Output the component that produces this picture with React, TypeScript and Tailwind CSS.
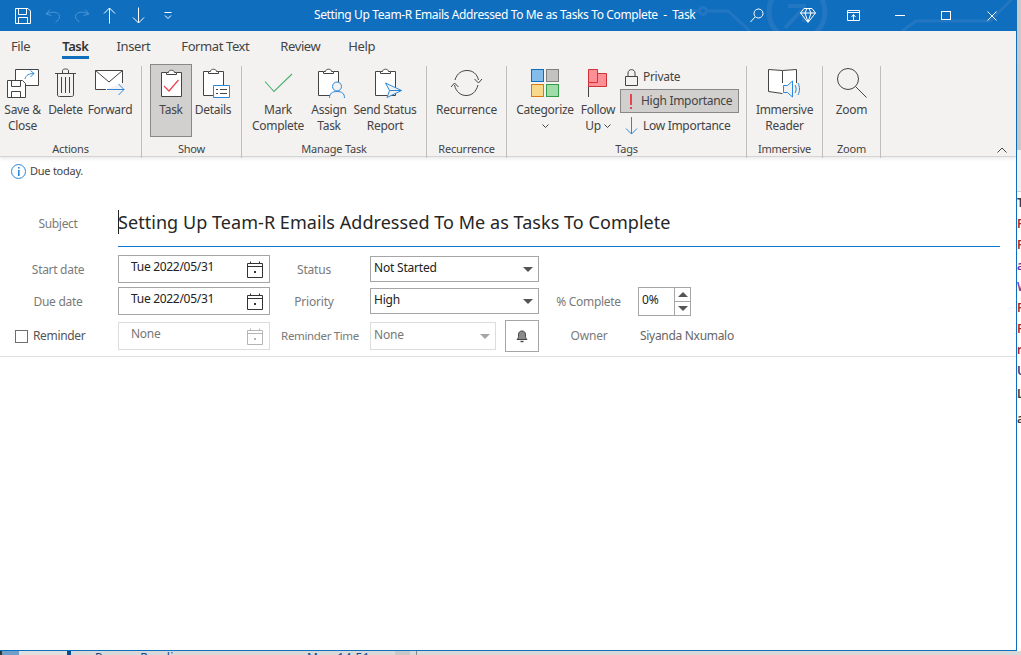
import type { ReactNode } from "react";

const ink = "#444444";
const blue = "#2b88d8";

function Svg({ w, h, children, className }: { w: number; h: number; children: ReactNode; className?: string }) {
  return (
    <svg width={w} height={h} viewBox={`0 0 ${w} ${h}`} fill="none" className={className}>
      {children}
    </svg>
  );
}

function Clipboard({ children }: { children?: ReactNode }) {
  return (
    <>
      <path d="M6.5 3.5H1.5V27.5H21.5V3.5H16.5" stroke={ink} fill="#fff" />
      <path d="M6.5 5.5V3.5H8.5C8.5 0.5 14.5 0.5 14.5 3.5H16.5V5.5Z" stroke={ink} fill="#fff" />
      {children}
    </>
  );
}

function Chevron() {
  return (
    <Svg w={7} h={5} className="inline-block align-middle">
      <path d="M0.5 0.5L3.5 3.5L6.5 0.5" stroke={ink} />
    </Svg>
  );
}

const icons: Record<string, ReactNode> = {
  save: (
    <Svg w={32} h={31}>
      <path d="M8.5 12V1.5H31.5V17.5H19" stroke={ink} fill="#fff" />
      <path d="M18 11C19 7 22 5.5 27 5.5M27 5.5L23.5 2.5M27 5.5L23.5 9" stroke={blue} />
      <path d="M0.5 12.5H15.5L18.5 15.5V29.5H0.5Z" stroke={ink} fill="#fff" />
      <path d="M4.5 12.5V18.5H13.5V12.5M4.5 29.5V23.5H13.5V29.5" stroke={ink} />
    </Svg>
  ),
  trash: (
    <Svg w={22} h={30}>
      <path d="M0 5.5H21" stroke={ink} />
      <path d="M7.5 5V2.5C7.5 0.5 13.5 0.5 13.5 2.5V5" stroke={ink} />
      <path d="M2.5 5.5V27C2.5 28 3.5 28.5 4.5 28.5H16.5C17.5 28.5 18.5 28 18.5 27V5.5" stroke={ink} />
      <path d="M6.5 9V25M10.5 9V25M14.5 9V25" stroke={ink} />
    </Svg>
  ),
  forward: (
    <Svg w={31} h={26}>
      <path d="M11 19.5H0.5V0.5H27.5V13" stroke={ink} fill="#fff" />
      <path d="M0.5 0.5L14 12L27.5 0.5" stroke={ink} />
      <path d="M12 19.5H29M29 19.5L23.5 14M29 19.5L23.5 25" stroke={blue} />
    </Svg>
  ),
  task: (
    <Svg w={23} h={29}>
      <Clipboard>
        <path d="M4 17L9 22L18.5 11" stroke="#e8434f" strokeWidth="1.2" />
      </Clipboard>
    </Svg>
  ),
  details: (
    <Svg w={28} h={31} className="ml-[5px]">
      <Clipboard />
      <path d="M11.5 17.5H27.5V29.5H11.5Z" stroke={blue} fill="#fff" />
      <path d="M14 21.5H16M18 21.5H25M14 25.5H16M18 25.5H25" stroke={ink} />
    </Svg>
  ),
  check: (
    <Svg w={29} h={20}>
      <path d="M1 8.5L10 18.5L28 1" stroke="#4caf6d" strokeWidth="1.1" />
    </Svg>
  ),
  assign: (
    <Svg w={30} h={31} className="ml-[6px]">
      <Clipboard />
      <circle cx="20" cy="18.5" r="4.5" stroke={blue} fill="#f3f2f1" />
      <path d="M12.5 30C12.5 25.5 15 23.5 20 23.5C25 23.5 27.5 25.5 27.5 30" stroke={blue} fill="#f3f2f1" />
    </Svg>
  ),
  send: (
    <Svg w={29} h={31} className="ml-[6px]">
      <Clipboard />
      <path d="M11.5 15L27.5 22.5L13 29.5L15.5 22.5Z" stroke={blue} fill="#f3f2f1" />
      <path d="M15.5 22.5H27.5" stroke={blue} />
    </Svg>
  ),
  recurrence: (
    <Svg w={33} h={28}>
      <path d="M5 11C7 4 12 1.5 17 1.5C23 1.5 27 5 28.5 11" stroke={ink} />
      <path d="M28 16C26 23 22 26.5 16 26.5C11 26.5 6 23 4.5 16" stroke={ink} />
      <path d="M24.5 10L28.5 14L32 10" stroke={ink} />
      <path d="M1 18L4.5 14L8.5 18" stroke={ink} />
    </Svg>
  ),
  categorize: (
    <div className="grid grid-cols-[13px_13px] gap-x-[2px] gap-y-[2px]">
      <div className="h-[13px] border border-[#0f6cbd] bg-[#83bbeb]" />
      <div className="h-[13px] border border-[#7f7f7f] bg-[#c4c2c0]" />
      <div className="h-[13px] border border-[#d9780f] bg-[#f8d98c]" />
      <div className="h-[13px] border border-[#2f9a48] bg-[#9fdca7]" />
    </div>
  ),
  flag: (
    <Svg w={20} h={28}>
      <path d="M0.5 1V28" stroke={ink} />
      <path d="M0.5 0.5H9.5V13.5H0.5Z" stroke="#d13438" fill="#ff8f97" />
      <path d="M9.5 4.5H18.5V17.5H0.5V13.5H9.5Z" stroke="#d13438" fill="#ff8f97" />
    </Svg>
  ),
  reader: (
    <Svg w={33} h={30}>
      <path d="M14.5 25.5L0.5 23.5V1.5L14.5 2.5L28.5 1.5V15" stroke={ink} fill="#fff" />
      <path d="M14.5 3V15" stroke={ink} />
      <path d="M15.5 17.5H19.5L24.5 13V29L19.5 24.5H15.5Z" stroke={blue} fill="#f3f2f1" />
      <path d="M27 17C28.5 19.5 28.5 22.5 27 25M30 15C32 19 32 23 30 27" stroke={blue} />
    </Svg>
  ),
  zoom: (
    <Svg w={30} h={30}>
      <circle cx="11" cy="11" r="10.5" stroke={ink} />
      <path d="M18.5 18.5L29.5 29.5" stroke={ink} />
    </Svg>
  ),
};

function RibbonButton({ icon, label, width, active }: { icon: string; label: ReactNode; width: number; active?: boolean }) {
  return (
    <div
      className={`flex flex-col items-center text-center leading-[16px] text-[#444444] h-[73px] tracking-[-0.3px] ${active ? "bg-[#d2d0ce] border border-[#8a8886] pt-[2px]" : "pt-[3px]"}`}
      style={{ width }}
    >
      <div className="h-[32px] mb-[3px] flex items-center justify-center">{icons[icon]}</div>
      <div className="whitespace-nowrap">{label}</div>
    </div>
  );
}

function Group({ label, width, children, className }: { label: string; width: number; children: ReactNode; className?: string }) {
  return (
    <div className="flex flex-col border-r border-[#c0bfbd] mt-[4px] shrink-0 h-[92px]" style={{ width }}>
      <div className={`flex h-[77px] -mt-[2px] ${className ?? "justify-center"}`}>{children}</div>
      <div className="text-center text-[11px] leading-[14px] text-[#444444] mt-[1px]">{label}</div>
    </div>
  );
}

function CalendarIcon({ muted }: { muted?: boolean }) {
  const c = muted ? "#b5b5b5" : "#333333";
  return (
    <Svg w={16} h={17}>
      <path d="M0.5 2.5H15.5V16.5H0.5Z" stroke={c} />
      <path d="M0.5 5.5H15.5M3.5 0.5V3M12.5 0.5V3" stroke={c} />
      <rect x="7" y="10" width="2" height="2" fill={c} />
    </Svg>
  );
}

function DateBox({ value, muted }: { value: string; muted?: boolean }) {
  return (
    <div className={`w-[152px] h-[28px] border flex items-center justify-between pl-[12px] pr-[6px] ${muted ? "border-[#dcdcdc] text-[#777777]" : "border-[#a6a6a6] text-[#222222]"}`}>
      <span className="-mt-[4px] tracking-[-0.3px]">{value}</span>
      <CalendarIcon muted={muted} />
    </div>
  );
}

function Combo({ value, width, height, muted }: { value: string; width: number; height: number; muted?: boolean }) {
  return (
    <div
      className={`border flex items-center justify-between pl-[3px] pr-[5px] ${muted ? "border-[#dcdcdc] text-[#777777]" : "border-[#a6a6a6] text-[#222222]"}`}
      style={{ width, height }}
    >
      <span className="-mt-[3px]">{value}</span>
      <span className={`w-0 h-0 border-x-[5px] border-x-transparent border-t-[5px] ${muted ? "border-t-[#a6a6a6]" : "border-t-[#555555]"}`} />
    </div>
  );
}

function FormLabel({ children }: { children: ReactNode }) {
  return <div className="w-[116px] text-center text-[#7a7a7a] whitespace-nowrap tracking-[-0.3px]">{children}</div>;
}

const sideRows = [
  { h: 21, c: "#3b3b3b", t: "T" },
  { h: 21, c: "#a4262c", t: "F" },
  { h: 21, c: "#a4262c", t: "F" },
  { h: 21, c: "#6b2fa0", t: "a" },
  { h: 21, c: "#7a3fa5", t: "W" },
  { h: 21, c: "#a4262c", t: "F" },
  { h: 21, c: "#a4262c", t: "F" },
  { h: 21, c: "#a4262c", t: "r" },
  { h: 21, c: "#2b3a80", t: "U" },
  { h: 26, c: "#3b3b3b", t: "L" },
  { h: 24, c: "#3b3b3b", t: "a" },
];

export default function App() {
  return (
    <div className="w-[1021px] h-[655px] overflow-hidden flex flex-col bg-white text-[12px] font-['Noto_Sans','Open_Sans',sans-serif] tracking-[-0.2px]">
      <div className="flex h-[651px]">
        <div className="w-[1017px] shrink-0 flex flex-col border-r border-b border-[#106ebe]">
          {/* Title bar */}
          <div className="relative h-[31px] shrink-0 bg-[#106ebe] text-white flex items-center overflow-hidden">
            <svg className="absolute left-[680px] top-0" width="336" height="31" fill="none" stroke="#2377c2" strokeWidth="3">
              <path d="M0 11H20M28 11H48L70 31" />
              <circle cx="23" cy="11" r="3.5" />
              <circle cx="117" cy="12" r="28" strokeWidth="5" />
              <path d="M105 28L122 10M108 6H124V22" strokeWidth="4" />
              <path d="M222 31L236 21H310L336 -5" />
            </svg>
            <div className="relative flex items-center w-[190px] h-full">
              <Svg w={16} h={16} className="ml-[15px]">
                <path d="M0.5 0.5H13L15.5 3V15.5H0.5Z" stroke="#fff" />
                <path d="M3.5 1V6.5H11.5V1M3.5 15V9.5H12.5V15" stroke="#fff" />
              </Svg>
              <Svg w={16} h={15} className="ml-[14px]">
                <path d="M1 6L5 1.5M1 6L6.5 7.5M1 6C6 3 14.5 3.5 14.5 8.5C14.5 11 12.5 13 10.5 14" stroke="#4b95d6" />
              </Svg>
              <Svg w={16} h={15} className="ml-[13px]">
                <path d="M15 6L11 1.5M15 6L9.5 7.5M15 6C10 3 1.5 3.5 1.5 8.5C1.5 11 3.5 13 5.5 14" stroke="#4b95d6" />
              </Svg>
              <Svg w={13} h={17} className="ml-[13px]">
                <path d="M6.5 1V16.5M1 6.5L6.5 1L12 6.5" stroke="#fff" />
              </Svg>
              <Svg w={13} h={17} className="ml-[16px]">
                <path d="M6.5 0.5V16M1 10.5L6.5 16L12 10.5" stroke="#fff" />
              </Svg>
              <Svg w={8} h={8} className="ml-[19px]">
                <path d="M0.5 0.5H7.5M1 3.5L4 6.5L7 3.5" stroke="#fff" />
              </Svg>
            </div>
            <div className="relative w-[124px]" />
            <div className="relative w-[400px] whitespace-nowrap tracking-[-0.37px] -mt-[2px]">
              Setting Up Team-R Emails Addressed To Me as Tasks To Complete&nbsp; -&nbsp; Task
            </div>
            <div className="relative flex items-center ml-auto pr-[19px]">
              <Svg w={14} h={15} className="mr-[36px]">
                <circle cx="8.5" cy="5.5" r="4.5" stroke="#fff" />
                <path d="M5 9L0.5 14" stroke="#fff" />
              </Svg>
              <Svg w={16} h={15} className="mr-[31px]">
                <path d="M4 0.5H12L15.5 5L8 14.5L0.5 5ZM0.5 5H15.5M5 5L8 14M11 5L8 14M5 5L7 0.5M11 5L9 0.5" stroke="#fff" />
              </Svg>
              <Svg w={13} h={11} className="mr-[35px]">
                <path d="M0.5 0.5H12.5V10.5H0.5ZM0.5 2.5H12.5" stroke="#fff" />
                <path d="M6.5 10V5M4.5 7L6.5 4.5L8.5 7" stroke="#fff" />
              </Svg>
              <div className="w-[10px] h-px bg-white mr-[36px]" />
              <div className="w-[10px] h-[9px] border border-white mr-[36px]" />
              <Svg w={10} h={10}>
                <path d="M0.5 0.5L9.5 9.5M9.5 0.5L0.5 9.5" stroke="#fff" />
              </Svg>
            </div>
          </div>

          {/* Tabs */}
          <div className="h-[31px] shrink-0 bg-[#f3f2f1] flex pl-[11px] text-[13px] text-[#444444] pt-[6px] tracking-[-0.4px]">
            <span>File</span>
            <span className="relative ml-[32px] font-semibold text-[#333333]">
              Task
              <span className="absolute left-0 right-0 top-[19px] h-[3px] bg-[#106ebe]" />
            </span>
            <span className="ml-[28px]">Insert</span>
            <span className="ml-[31px]">Format Text</span>
            <span className="ml-[31px]">Review</span>
            <span className="ml-[28px]">Help</span>
          </div>

          {/* Ribbon */}
          <div className="relative h-[95px] shrink-0 bg-[#f3f2f1] flex border-b border-[#d4d4d4] shadow-[0_2px_3px_rgba(0,0,0,0.08)]">
            <Group label="Actions" width={142} className="pl-[1px]">
              <RibbonButton icon="save" label={<>Save &amp;<br />Close</>} width={43} />
              <RibbonButton icon="trash" label="Delete" width={43} />
              <RibbonButton icon="forward" label="Forward" width={46} />
            </Group>
            <Group label="Show" width={100} className="pl-[8px]">
              <RibbonButton icon="task" label="Task" width={42} active />
              <RibbonButton icon="details" label="Details" width={42} />
            </Group>
            <Group label="Manage Task" width={185} className="pl-[11px]">
              <RibbonButton icon="check" label={<>Mark<br />Complete</>} width={50} />
              <RibbonButton icon="assign" label={<>Assign<br />Task</>} width={52} />
              <RibbonButton icon="send" label={<>Send Status<br />Report</>} width={60} />
            </Group>
            <Group label="Recurrence" width={80}>
              <RibbonButton icon="recurrence" label="Recurrence" width={68} />
            </Group>
            <Group label="Tags" width={240} className="pl-[7px]">
              <RibbonButton icon="categorize" label={<>Categorize<br /><Chevron /></>} width={62} />
              <RibbonButton icon="flag" label={<>Follow<br />Up <Chevron /></>} width={44} />
              <div className="flex flex-col w-[119px] text-[#444444] tracking-[-0.3px]">
                <div className="flex items-center h-[24px] pl-[5px] gap-[5px] mt-[1px]">
                  <Svg w={13} h={17}>
                    <path d="M0.5 7.5H12.5V16.5H0.5Z" stroke={ink} />
                    <path d="M3 7.5V4C3 -0.5 10 -0.5 10 4V7.5" stroke={ink} />
                  </Svg>
                  <span>Private</span>
                </div>
                <div className="flex items-center h-[24px] pl-[8px] gap-[9px] bg-[#d2d0ce] border border-[#8a8886]">
                  <div className="flex flex-col items-center gap-[2px] w-[3px]">
                    <div className="w-[2px] h-[11px] bg-[#e8434f]" />
                    <div className="w-[2px] h-[2px] bg-[#e8434f]" />
                  </div>
                  <span className="whitespace-nowrap">High Importance</span>
                </div>
                <div className="flex items-center h-[24px] pl-[5px] gap-[5px] mt-[1px]">
                  <Svg w={13} h={18}>
                    <path d="M6.5 0V17M1 11.5L6.5 17L12 11.5" stroke={blue} />
                  </Svg>
                  <span className="whitespace-nowrap">Low Importance</span>
                </div>
              </div>
            </Group>
            <Group label="Immersive" width={76}>
              <RibbonButton icon="reader" label={<>Immersive<br />Reader</>} width={66} />
            </Group>
            <Group label="Zoom" width={58}>
              <RibbonButton icon="zoom" label="Zoom" width={50} />
            </Group>
            <Svg w={10} h={6} className="absolute right-[9px] bottom-[3px]">
              <path d="M0.5 5.5L5 1L9.5 5.5" stroke={ink} />
            </Svg>
          </div>

          {/* Info bar */}
          <div className="h-[23px] shrink-0 flex items-center pl-[11px] gap-[4px] text-[11px] text-[#444444] mt-[3px] tracking-[-0.25px]">
            <Svg w={15} h={15}>
              <circle cx="7.5" cy="7.5" r="7" stroke="#2b88d8" />
              <rect x="7" y="3" width="1.6" height="1.6" fill="#2b88d8" />
              <rect x="7" y="6" width="1.6" height="6" fill="#2b88d8" />
            </Svg>
            <span>Due today.</span>
          </div>

          {/* Form */}
          <div className="flex items-end h-[43px] mt-[21px] shrink-0">
            <div className="self-center -mt-[4px]"><FormLabel>Subject</FormLabel></div>
            <div className="ml-[2px] w-[882px] h-full border-b border-[#0f78d4] flex items-center text-[18px] text-[#262626] tracking-[0.05px]">
              <span className="w-px h-[24px] bg-[#222222] -mr-px -mt-[6px]" />
              <span className="-mt-[5px]">Setting Up Team-R Emails Addressed To Me as Tasks To Complete</span>
            </div>
          </div>
          <div className="flex items-center h-[28px] mt-[8px] shrink-0">
            <div className="mt-[1px]"><FormLabel>Start date</FormLabel></div>
            <div className="ml-[2px]"><DateBox value="Tue 2022/05/31" /></div>
            <div className="w-[100px] mt-[1px] text-center text-[#7a7a7a] pr-[12px]">Status</div>
            <Combo value="Not Started" width={169} height={26} />
          </div>
          <div className="flex items-center h-[28px] mt-[4px] shrink-0">
            <div className="mt-[1px]"><FormLabel>Due date</FormLabel></div>
            <div className="ml-[2px]"><DateBox value="Tue 2022/05/31" /></div>
            <div className="w-[100px] mt-[1px] text-center text-[#7a7a7a] pr-[12px]">Priority</div>
            <Combo value="High" width={169} height={26} />
            <div className="w-[99px] mt-[1px] text-center text-[#7a7a7a] tracking-[-0.3px]">% Complete</div>
            <div className="w-[53px] h-[29px] border border-[#a6a6a6] flex items-center text-[#222222]">
              <span className="w-[35px] pl-[3px] -mt-[3px]">0%</span>
              <div className="h-full flex-1 flex flex-col border-l border-[#a6a6a6]">
                <div className="flex-1 flex items-center justify-center border-b border-[#a6a6a6]">
                  <span className="w-0 h-0 border-x-[5px] border-x-transparent border-b-[5px] border-b-[#555555]" />
                </div>
                <div className="flex-1 flex items-center justify-center">
                  <span className="w-0 h-0 border-x-[5px] border-x-transparent border-t-[5px] border-t-[#555555]" />
                </div>
              </div>
            </div>
          </div>
          <div className="flex items-center h-[32px] mt-[5px] shrink-0">
            <div className="w-[116px] flex items-center pl-[15px] gap-[5px] text-[#555555] tracking-[-0.35px]">
              <div className="w-[13px] h-[13px] border border-[#6e6e6e]" />
              <span>Reminder</span>
            </div>
            <div className="ml-[2px]"><DateBox value="None" muted /></div>
            <div className="w-[100px] text-center text-[#7a7a7a] whitespace-nowrap text-[11.5px] tracking-[-0.35px]">Reminder Time</div>
            <Combo value="None" width={126} height={28} muted />
            <div className="ml-[9px] w-[34px] h-[32px] border border-[#a6a6a6] flex items-center justify-center">
              <Svg w={12} h={13}>
                <path d="M1 9.5C2.5 8 2.5 7 2.5 5C2.5 2 4 1 6 1C8 1 9.5 2 9.5 5C9.5 7 9.5 8 11 9.5Z" stroke="#444444" fill="#8a8a8a" />
                <path d="M4.5 11.5H7.5" stroke="#444444" strokeWidth="1.4" />
              </Svg>
            </div>
            <div className="w-[100px] text-center text-[#7a7a7a]">Owner</div>
            <div className="text-[#666666] tracking-[-0.3px] pl-[1px]">Siyanda Nxumalo</div>
          </div>
          <div className="mt-[4px] h-px bg-[#e1e1e1] shrink-0" />
          <div className="flex-1" />
        </div>

        {/* Window behind */}
        <div className="flex-1 flex flex-col overflow-hidden text-[12px] leading-none">
          <div className="h-[150px] shrink-0 bg-[#c9c9c9]" />
          <div className="h-[42px] shrink-0 bg-[#f0f0f0] border-b border-[#d0d0d0]" />
          {sideRows.map((row, i) => (
            <div key={i} className="flex items-center font-semibold" style={{ height: row.h, color: row.c }}>
              {row.t}
            </div>
          ))}
        </div>
      </div>

      {/* Window behind, bottom edge */}
      <div className="h-[4px] flex bg-[#d9d9d9] overflow-hidden text-[12px] leading-[12px] text-[#0b4a8a] tracking-[0.4px] whitespace-nowrap">
        <div className="w-[2px] bg-[#333333]" />
        <div className="w-[17px] bg-[#6f9fc8]" />
        <div className="w-[48px] bg-[#e0e0e0]" />
        <div className="w-[4px] bg-[#0b4a8a]" />
        <div className="w-[24px]" />
        <div className="w-[212px] pt-[1px]">Person Readin</div>
        <div className="w-[88px] pt-[1px]">Mon 14:51</div>
        <div className="w-[15px] bg-[#c8c8c8]" />
        <div className="w-px bg-[#8a8a8a] ml-[6px]" />
      </div>
    </div>
  );
}
